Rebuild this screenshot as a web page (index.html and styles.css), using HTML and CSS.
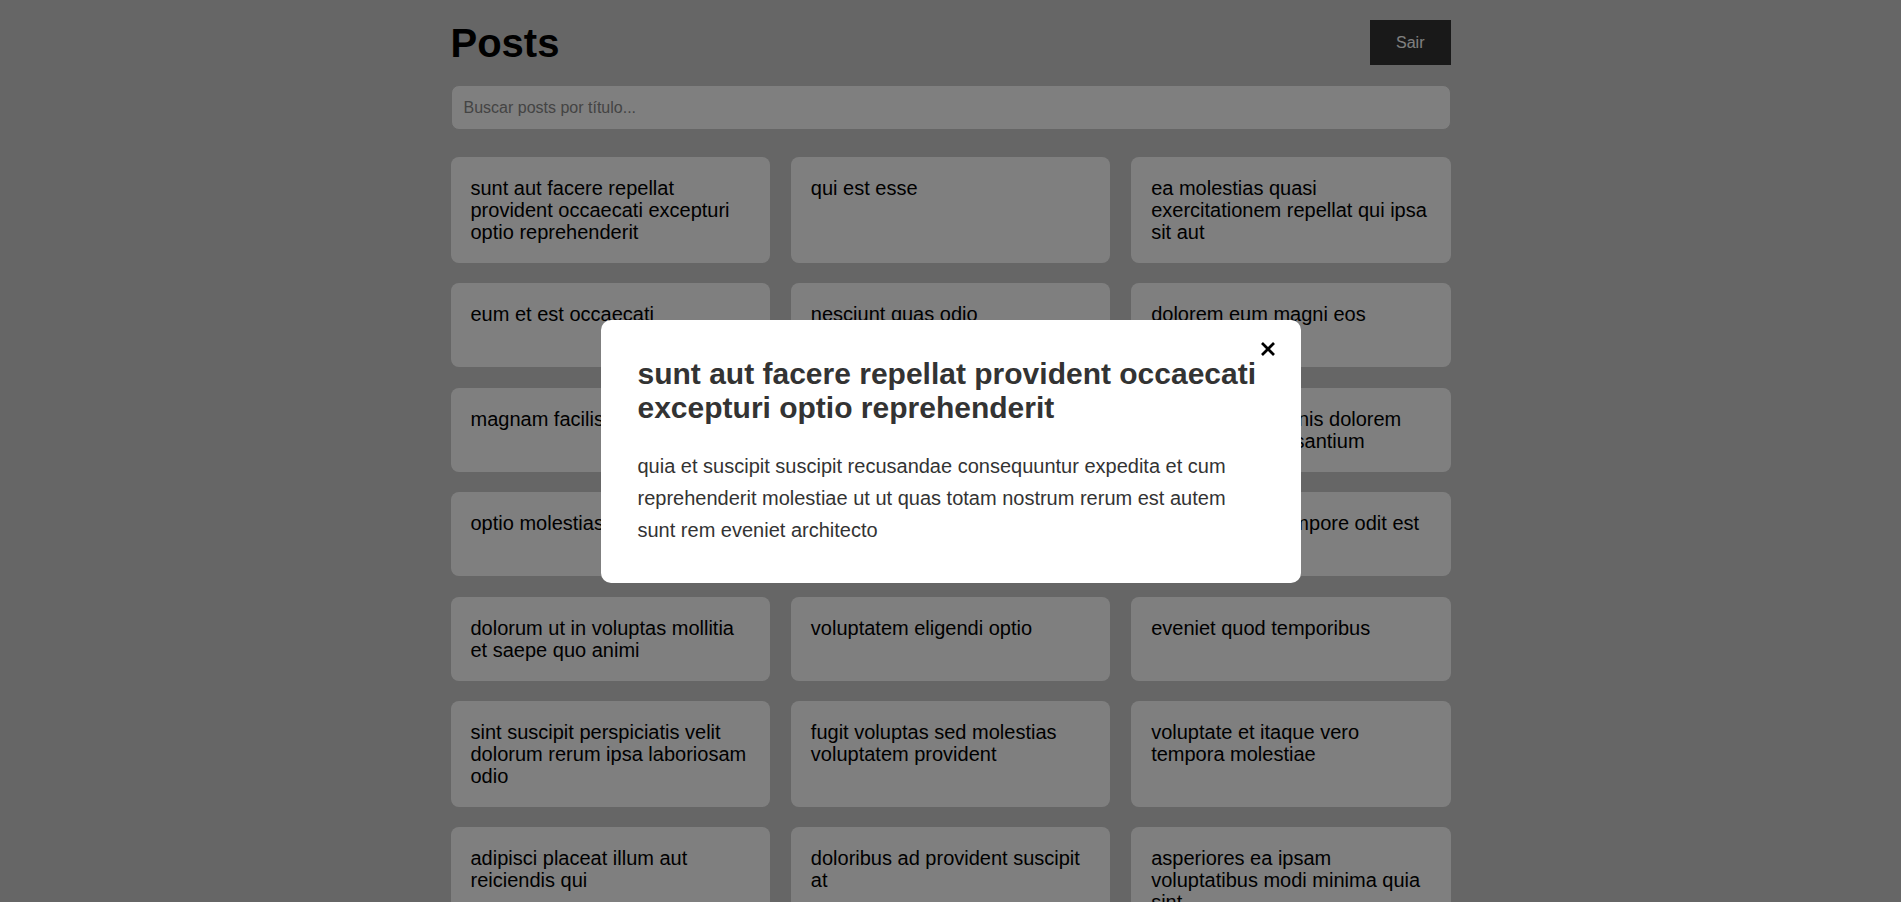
FILE: index.html
```html
<!DOCTYPE html>
<html lang="pt-BR">
<head>
<meta charset="utf-8">
<title>Posts</title>
<link rel="stylesheet" href="styles.css">
</head>
<body>
<div class="container">
  <header class="header">
    <h1 class="page-title">Posts</h1>
    <button class="logout-btn" type="button">Sair</button>
  </header>
  <input class="search" type="text" placeholder="Buscar posts por título...">
  <div class="posts-grid">
    <div class="post-card"><h3 class="post-title">sunt aut facere repellat provident occaecati excepturi optio reprehenderit</h3></div>
    <div class="post-card"><h3 class="post-title">qui est esse</h3></div>
    <div class="post-card"><h3 class="post-title">ea molestias quasi exercitationem repellat qui ipsa sit aut</h3></div>
    <div class="post-card"><h3 class="post-title">eum et est occaecati</h3></div>
    <div class="post-card"><h3 class="post-title">nesciunt quas odio</h3></div>
    <div class="post-card"><h3 class="post-title">dolorem eum magni eos aperiam quia</h3></div>
    <div class="post-card"><h3 class="post-title">magnam facilis autem</h3></div>
    <div class="post-card"><h3 class="post-title">dolorem dolore est ipsam</h3></div>
    <div class="post-card"><h3 class="post-title">nesciunt iure omnis dolorem tempora et accusantium</h3></div>
    <div class="post-card"><h3 class="post-title">optio molestias id quia eum</h3></div>
    <div class="post-card"><h3 class="post-title">et ea vero quia laudantium autem</h3></div>
    <div class="post-card"><h3 class="post-title">in quibusdam tempore odit est dolorem</h3></div>
    <div class="post-card"><h3 class="post-title">dolorum ut in voluptas mollitia et saepe quo animi</h3></div>
    <div class="post-card"><h3 class="post-title">voluptatem eligendi optio</h3></div>
    <div class="post-card"><h3 class="post-title">eveniet quod temporibus</h3></div>
    <div class="post-card"><h3 class="post-title">sint suscipit perspiciatis velit dolorum rerum ipsa laboriosam odio</h3></div>
    <div class="post-card"><h3 class="post-title">fugit voluptas sed molestias voluptatem provident</h3></div>
    <div class="post-card"><h3 class="post-title">voluptate et itaque vero tempora molestiae</h3></div>
    <div class="post-card"><h3 class="post-title">adipisci placeat illum aut reiciendis qui</h3></div>
    <div class="post-card"><h3 class="post-title">doloribus ad provident suscipit at</h3></div>
    <div class="post-card"><h3 class="post-title">asperiores ea ipsam voluptatibus modi minima quia sint</h3></div>
    <div class="post-card"><h3 class="post-title">dolor sint quo a velit explicabo quia nam</h3></div>
    <div class="post-card"><h3 class="post-title">maxime id vitae nihil numquam</h3></div>
    <div class="post-card"><h3 class="post-title">autem hic labore sunt dolores incidunt</h3></div>
    <div class="post-card"><h3 class="post-title">rem alias distinctio quo quis</h3></div>
    <div class="post-card"><h3 class="post-title">est et quae odit qui non</h3></div>
    <div class="post-card"><h3 class="post-title">quasi id et eos tenetur aut quo autem</h3></div>
  </div>
</div>

<div class="overlay">
  <div class="modal">
    <button class="close-btn" type="button" aria-label="Fechar">
      <svg width="14" height="14" viewBox="0 0 14 14" aria-hidden="true"><path d="M1 1 L13 13 M13 1 L1 13" stroke="#000" stroke-width="2.7" fill="none"/></svg>
    </button>
    <h2 class="modal-title">sunt aut facere repellat provident occaecati excepturi optio reprehenderit</h2>
    <p class="modal-body">quia et suscipit suscipit recusandae consequuntur expedita et cum reprehenderit molestiae ut ut quas totam nostrum rerum est autem sunt rem eveniet architecto</p>
  </div>
</div>
</body>
</html>
```

FILE: styles.css
```css
* {
  box-sizing: border-box;
}

body {
  margin: 0;
  background: #cccccc;
  font-family: "Liberation Sans", Arial, sans-serif;
  color: #000;
}

.container {
  max-width: 1000px;
  margin: 0 auto;
  padding-top: 20px;
}

.header {
  display: flex;
  justify-content: space-between;
  align-items: center;
  margin-bottom: 20px;
}

.page-title {
  margin: 0;
  font-size: 40px;
  font-weight: bold;
  line-height: 1.1;
}

.logout-btn {
  height: 45px;
  padding: 0 26px;
  border: none;
  border-radius: 0;
  background: #333;
  color: #fff;
  font-family: inherit;
  font-size: 16px;
  cursor: pointer;
}

.search {
  display: block;
  width: 100%;
  height: 45px;
  padding: 0 12px;
  margin-bottom: 27px;
  border: 1px solid #cccccc;
  border-radius: 8px;
  background: #fff;
  font-family: inherit;
  font-size: 16px;
  color: #000;
}

.search::placeholder {
  color: #888;
}

.posts-grid {
  display: grid;
  grid-template-columns: repeat(3, 1fr);
  column-gap: 21px;
  row-gap: 20.4px;
  padding-bottom: 20px;
}

.post-card {
  background: #fff;
  border-radius: 8px;
  padding: 20px;
}

.post-title {
  margin: 0;
  font-size: 20px;
  font-weight: normal;
  line-height: 1.1;
}

.overlay {
  position: fixed;
  inset: 0;
  background: rgba(0, 0, 0, 0.5);
  display: flex;
  align-items: center;
  justify-content: center;
}

.modal {
  position: relative;
  width: 700px;
  background: #fff;
  border-radius: 10px;
  padding: 37px;
  color: #333;
}

.close-btn {
  position: absolute;
  top: 22px;
  right: 26px;
  width: 14px;
  height: 14px;
  padding: 0;
  border: none;
  background: none;
  cursor: pointer;
  display: flex;
}

.modal-title {
  margin: 0 0 24px;
  font-size: 30px;
  font-weight: bold;
  line-height: 1.15;
}

.modal-body {
  margin: 0;
  font-size: 20px;
  line-height: 1.6;
}
```
